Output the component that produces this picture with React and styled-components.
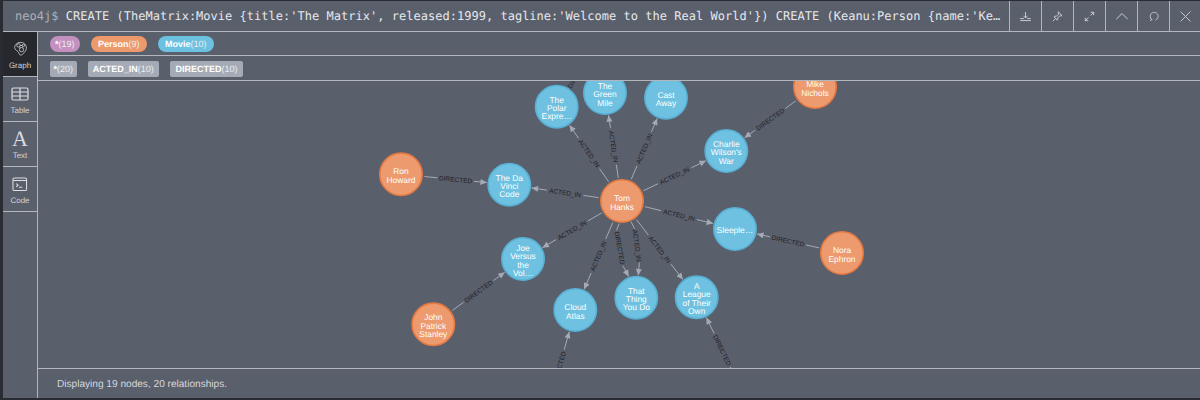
import React from 'react'
import styled, { createGlobalStyle } from 'styled-components'

const line = '#b3b6bd'
const bg = '#5a5f6c'
const dark = '#2a2c33'
const sans = '"Liberation Sans", Arial, sans-serif'

const Global = createGlobalStyle`
  html, body { margin: 0; padding: 0; background: ${dark}; }
  * { box-sizing: border-box; }
  body { text-rendering: geometricPrecision; }
`

const Frame = styled.div`
  width: 1200px;
  height: 400px;
  display: flex;
  flex-direction: column;
  background: ${bg};
  border-left: 3px solid ${dark};
  border-top: 1px solid ${dark};
  border-bottom: 2px solid ${dark};
  font-family: ${sans};
  overflow: hidden;
`

const Editor = styled.div`
  height: 31px;
  flex: none;
  display: flex;
  border-bottom: 1px solid ${line};
`

const Query = styled.div`
  flex: 1;
  min-width: 0;
  padding: 0 4px 0 12px;
  line-height: 30px;
  font-family: "DejaVu Sans Mono", monospace;
  font-size: 12px;
  letter-spacing: 0.02px;
  color: #e6e8ec;
  white-space: pre;
  overflow: hidden;
  text-overflow: ellipsis;
`

const Prompt = styled.span`
  color: #adb1b9;
`

const ActionButton = styled.div`
  width: 32px;
  flex: none;
  display: flex;
  align-items: center;
  justify-content: center;
  border-left: 1px solid ${line};
  color: #c9ccd2;
  &:last-child { width: 31px; }
`

const Body = styled.div`
  flex: 1;
  min-height: 0;
  display: flex;
`

const Sidebar = styled.div`
  width: 35px;
  flex: none;
  border-right: 1px solid ${line};
`

const Tab = styled.div`
  height: 45px;
  display: flex;
  flex-direction: column;
  align-items: center;
  border-bottom: 1px solid ${line};
  background: ${p => (p.$active ? '#26282e' : 'transparent')};
  color: #d3d5da;
  font-size: 8px;
`

const TabIcon = styled.div`
  height: 24px;
  margin-top: 5px;
  display: flex;
  align-items: center;
  justify-content: center;
`

const SerifA = styled.span`
  font-family: "Liberation Serif", serif;
  font-size: 22px;
  line-height: 24px;
  color: #d9dbe0;
`

const Content = styled.div`
  flex: 1;
  min-width: 0;
  display: flex;
  flex-direction: column;
`

const LegendRow = styled.div`
  height: ${p => p.$h}px;
  flex: none;
  display: flex;
  align-items: center;
  gap: 11.5px;
  padding: 1px 0 0 12px;
  border-bottom: 1px solid ${line};
`

const Pill = styled.span`
  height: 16px;
  line-height: 16px;
  padding: 0 ${p => p.$pad}px;
  border-radius: ${p => (p.$rel ? 2 : 8)}px;
  background: ${p => p.$color};
  color: #eceef1;
  font-size: 9px;
  white-space: nowrap;
  b { color: #fff; font-weight: 700; }
`

const GraphArea = styled.div`
  flex: 1;
  min-height: 0;
  overflow: hidden;
`

const Status = styled.div`
  height: 30px;
  flex: none;
  padding: 1px 0 0 19px;
  line-height: 30px;
  border-top: 1px solid ${line};
  color: #d5d7dc;
  font-size: 10.1px;
`

const PERSON = { fill: '#ec9a6e', stroke: '#e57a41' }
const MOVIE = { fill: '#6ec1e0', stroke: '#58b0d4' }

const nodes = {
  tom: { x: 622, y: 201, c: PERSON, t: ['Tom', 'Hanks'] },
  polar: { x: 556.7, y: 106.7, c: MOVIE, t: ['The', 'Polar', 'Expre…'] },
  mile: { x: 605, y: 93, c: MOVIE, t: ['The', 'Green', 'Mile'] },
  cast: { x: 666, y: 97.7, c: MOVIE, t: ['Cast', 'Away'] },
  mike: { x: 815, y: 87, c: PERSON, t: ['Mike', 'Nichols'] },
  charlie: { x: 726.3, y: 151, c: MOVIE, t: ['Charlie', 'Wilson\'s', 'War'] },
  sleep: { x: 735, y: 229, c: MOVIE, t: ['Sleeple…'] },
  nora: { x: 842, y: 253, c: PERSON, t: ['Nora', 'Ephron'] },
  league: { x: 696.7, y: 297.3, c: MOVIE, t: ['A', 'League', 'of Their', 'Own'] },
  thing: { x: 636.3, y: 297.7, c: MOVIE, t: ['That', 'Thing', 'You Do'] },
  cloud: { x: 575.3, y: 310, c: MOVIE, t: ['Cloud', 'Atlas'] },
  joe: { x: 523, y: 259, c: MOVIE, t: ['Joe', 'Versus', 'the', 'Vol…'] },
  john: { x: 433.3, y: 324.3, c: PERSON, t: ['John', 'Patrick', 'Stanley'] },
  ron: { x: 401, y: 174.3, c: PERSON, t: ['Ron', 'Howard'] },
  davinci: { x: 509.3, y: 184.7, c: MOVIE, t: ['The Da', 'Vinci', 'Code'] },
  // these sit past the edge of the canvas, only their edges show
  offPolar: { x: 600, y: 40, c: PERSON, t: [] },
  offCloud: { x: 543, y: 426, c: PERSON, t: [] },
  offLeague: { x: 748, y: 404, c: PERSON, t: [] },
}

const edges = [
  ['tom', 'polar', 'ACTED_IN'],
  ['tom', 'mile', 'ACTED_IN'],
  ['tom', 'cast', 'ACTED_IN'],
  ['tom', 'charlie', 'ACTED_IN'],
  ['tom', 'sleep', 'ACTED_IN'],
  ['tom', 'davinci', 'ACTED_IN'],
  ['tom', 'joe', 'ACTED_IN'],
  ['tom', 'cloud', 'ACTED_IN'],
  ['tom', 'league', 'ACTED_IN'],
  ['mike', 'charlie', 'DIRECTED'],
  ['nora', 'sleep', 'DIRECTED'],
  ['ron', 'davinci', 'DIRECTED'],
  ['john', 'joe', 'DIRECTED'],
  ['offPolar', 'polar', 'DIRECTED'],
  ['offCloud', 'cloud', 'DIRECTED'],
  ['offLeague', 'league', 'DIRECTED'],
]

const R = 22
const HALF_LABEL = 18.5

function Arrow({ from, tip }) {
  const a = Math.atan2(tip.y - from.y, tip.x - from.x)
  const back = 6.5
  const side = 3
  const bx = tip.x - Math.cos(a) * back
  const by = tip.y - Math.sin(a) * back
  const p1 = `${bx - Math.sin(a) * side},${by + Math.cos(a) * side}`
  const p2 = `${bx + Math.sin(a) * side},${by - Math.cos(a) * side}`
  return <polygon points={`${tip.x},${tip.y} ${p1} ${p2}`} fill="#a5abb6" />
}

function Label({ x, y, deg, text }) {
  let d = deg
  if (d > 90) d -= 180
  if (d < -90) d += 180
  return (
    <text
      x={x}
      y={y}
      dy="2.3"
      transform={`rotate(${d} ${x} ${y})`}
      textAnchor="middle"
      fontFamily={sans}
      fontSize="6.5"
      fill="#1c1e24"
    >
      {text}
    </text>
  )
}

function Edge({ start, mid, tip, text, hw = HALF_LABEL }) {
  const a1 = Math.atan2(tip.y - start.y, tip.x - start.x)
  const c = Math.cos(a1)
  const s = Math.sin(a1)
  const tail = { x: mid.x + c * hw, y: mid.y + s * hw }
  return (
    <g>
      <line x1={start.x} y1={start.y} x2={mid.x - c * hw} y2={mid.y - s * hw} stroke="#a5abb6" strokeWidth="1" />
      <line x1={tail.x} y1={tail.y} x2={tip.x} y2={tip.y} stroke="#a5abb6" strokeWidth="1" />
      <Arrow from={tail} tip={tip} />
      <Label x={mid.x} y={mid.y} deg={(a1 * 180) / Math.PI} text={text} />
    </g>
  )
}

function StraightEdge({ from, to, text }) {
  const a = nodes[from]
  const b = nodes[to]
  const ang = Math.atan2(b.y - a.y, b.x - a.x)
  const c = Math.cos(ang)
  const s = Math.sin(ang)
  const start = { x: a.x + c * (R + 1.5), y: a.y + s * (R + 1.5) }
  const tip = { x: b.x - c * (R + 0.5), y: b.y - s * (R + 0.5) }
  const mid = { x: (start.x + tip.x) / 2, y: (start.y + tip.y) / 2 }
  return <Edge start={start} mid={mid} tip={tip} text={text} />
}

function Node({ node }) {
  const h = 8.4
  const top = node.y - ((node.t.length - 1) * h) / 2 + 4.3
  return (
    <g>
      <circle cx={node.x} cy={node.y} r={R - 0.8} fill={node.c.fill} stroke={node.c.stroke} strokeWidth="1.6" />
      {node.t.map((l, i) => (
        <text key={i} x={node.x} y={top + i * h} textAnchor="middle" fontFamily={sans} fontSize="8.4" fill="#fff">
          {l}
        </text>
      ))}
    </g>
  )
}

function Graph() {
  return (
    <svg width="1159" height="287" viewBox="38 81 1159 287" style={{ display: 'block' }}>
      {edges.map(([f, t, l]) => (
        <StraightEdge key={f + t} from={f} to={t} text={l} />
      ))}
      {/* the two parallel edges bend away from each other */}
      <Edge start={{ x: 619.3, y: 223.5 }} mid={{ x: 619.7, y: 248 }} tip={{ x: 628.7, y: 276.5 }} text="DIRECTED" hw={18} />
      <Edge start={{ x: 631, y: 221.7 }} mid={{ x: 637, y: 245.7 }} tip={{ x: 638.3, y: 275.5 }} text="ACTED_IN" hw={17} />
      {Object.keys(nodes).map(k => (
        <Node key={k} node={nodes[k]} />
      ))}
    </svg>
  )
}

const Ico = ({ size = 13, sw = 1, children }) => (
  <svg width={size} height={size} viewBox="0 0 16 16" fill="none" stroke="currentColor" strokeWidth={sw} strokeLinecap="round" strokeLinejoin="round">
    {children}
  </svg>
)

const actions = [
  <Ico key="d" sw={1.2}>
    <path d="M8 3v6.500M5.800 7.500 8 9.800l2.200-2.300" />
    <path d="M2 10.500h3.500M10.500 10.500H14M2 13h12" />
  </Ico>,
  <Ico key="p" sw={1.2}>
    <path d="M9.200 2.500 13.500 6.800l-1.200.6-1.500-.3-2.600 2.600.2 1.900-.9.9L3.900 8.400l.9-.9 1.900.2 2.600-2.600-.3-1.500z" />
    <path d="M5.800 10.200 2.600 13.400" />
  </Ico>,
  <Ico key="e" sw={1.2}>
    <path d="M9.500 6.500 13 3M10 2.800h3.200V6" />
    <path d="M6.500 9.500 3 13M6 13.200H2.800V10" />
  </Ico>,
  <Ico key="c" size={16}>
    <path d="M2.500 11 8 5.500l5.500 5.500" />
  </Ico>,
  <Ico key="r" size={14}>
    <path d="M5.600 12.200A4.600 4.600 0 1 1 10 12.600" />
    <path d="M4.200 10.800l1.400 1.400-1.600 1" />
  </Ico>,
  <Ico key="x" size={15}>
    <path d="M3 3l10 10M13 3 3 13" />
  </Ico>,
]

const query = "CREATE (TheMatrix:Movie {title:'The Matrix', released:1999, tagline:'Welcome to the Real World'}) CREATE (Keanu:Person {name:'Keanu Reeves', born:1964}) CREATE (Carrie:Person {name:'Carrie-Anne Moss', born:1967})"

const nodeLegend = [
  { name: '*', count: 19, color: '#c490c0', pad: 5 },
  { name: 'Person', count: 9, color: '#ec9a6c', pad: 7 },
  { name: 'Movie', count: 10, color: '#6cc1e0', pad: 7 },
]

const relLegend = [
  { name: '*', count: 20, pad: 3.5 },
  { name: 'ACTED_IN', count: 10, pad: 4.75 },
  { name: 'DIRECTED', count: 10, pad: 5.5 },
]

const GraphIcon = () => (
  <svg width="15" height="16" viewBox="0 0 22 24" fill="none" stroke="#cfd2d7" strokeWidth="1.200">
    <path d="M6 3.500c3-2.200 8-2 11 .6 3 2.600 3.600 7 1.800 10.200-1.200 2.200-2.600 3.200-4 5-1.300 1.700-3.300 2.600-5 1.200-1.600-1.200-1-3.400-2.800-4.800C5 14.200 2.500 13 2.200 9.800 2 7.400 3.800 5 6 3.500z" />
    <circle cx="8" cy="6.500" r="2.600" />
    <circle cx="15.500" cy="6.500" r="1.900" />
    <circle cx="12.500" cy="13" r="3.200" />
    <path d="M10.500 7 14 6.600M9 8.800l2 1.500M14.800 8.300 13.500 10" />
  </svg>
)

const TableIcon = () => (
  <svg width="18" height="16" viewBox="0 0 18 16" fill="none" stroke="#dcdee2" strokeWidth="1.200">
    <rect x="1" y="2" width="16" height="12" rx="1.500" />
    <path d="M1 6h16M1 10h16M9 2v12" />
  </svg>
)

const CodeIcon = () => (
  <svg width="16" height="15" viewBox="0 0 17 16" fill="none" stroke="#dcdee2" strokeWidth="1.100">
    <rect x="1" y="1" width="14.500" height="13.500" rx="1.500" />
    <path d="M1 3.800h14.500M4.500 7l2 1.700-2 1.700M7.500 11h3.500" />
  </svg>
)

export default function App() {
  return (
    <Frame>
      <Global />
      <Editor>
        <Query>
          <Prompt>neo4j$ </Prompt>
          {query}
        </Query>
        {actions.map((icon, i) => (
          <ActionButton key={i}>{icon}</ActionButton>
        ))}
      </Editor>
      <Body>
        <Sidebar>
          <Tab $active>
            <TabIcon><GraphIcon /></TabIcon>
            Graph
          </Tab>
          <Tab>
            <TabIcon><TableIcon /></TabIcon>
            Table
          </Tab>
          <Tab>
            <TabIcon><SerifA>A</SerifA></TabIcon>
            Text
          </Tab>
          <Tab>
            <TabIcon><CodeIcon /></TabIcon>
            Code
          </Tab>
        </Sidebar>
        <Content>
          <LegendRow $h={24}>
            {nodeLegend.map(n => (
              <Pill key={n.name} $color={n.color} $pad={n.pad}>
                <b>{n.name}</b>({n.count})
              </Pill>
            ))}
          </LegendRow>
          <LegendRow $h={25}>
            {relLegend.map(n => (
              <Pill key={n.name} $rel $color="#a5abb6" $pad={n.pad}>
                <b>{n.name}</b>({n.count})
              </Pill>
            ))}
          </LegendRow>
          <GraphArea>
            <Graph />
          </GraphArea>
          <Status>Displaying 19 nodes, 20 relationships.</Status>
        </Content>
      </Body>
    </Frame>
  )
}
